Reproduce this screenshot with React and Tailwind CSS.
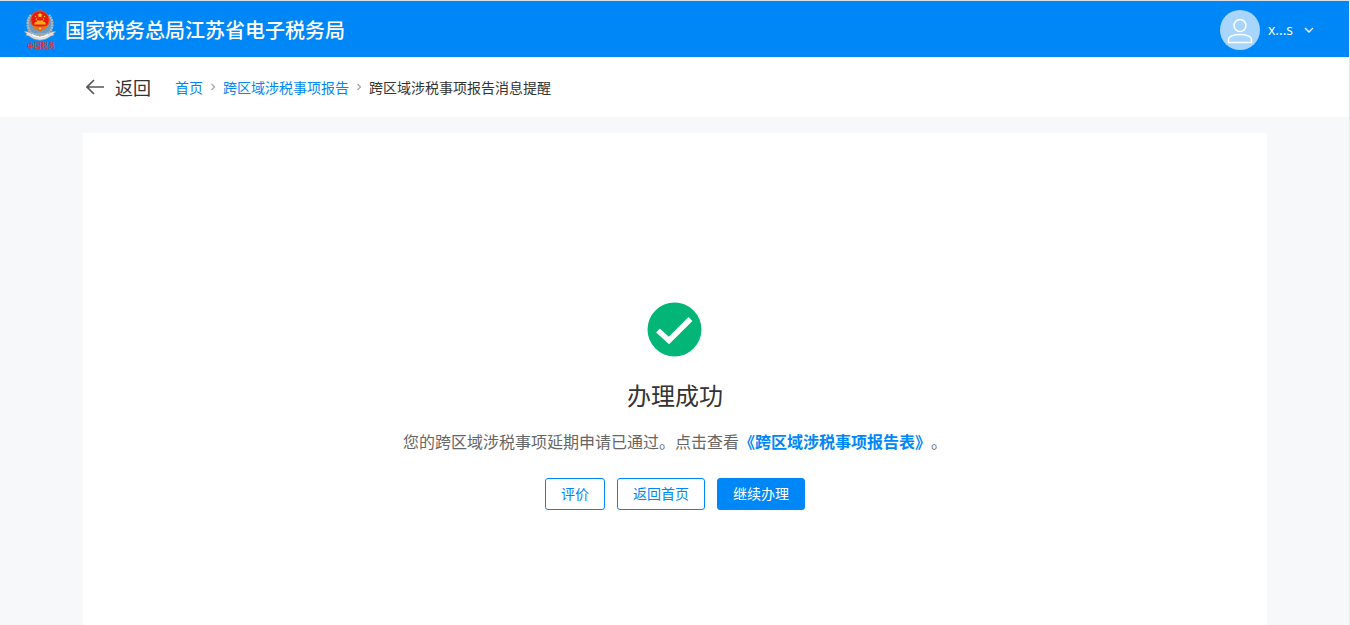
const crumbs = [
  { label: "首页", href: "#home" },
  { label: "跨区域涉税事项报告", href: "#report" },
];

const TaxEmblem = () => (
  <svg aria-hidden="true" viewBox="0 0 36 42" className="h-[42px] w-9 shrink-0">
    <path
      d="M9 6C4.500 11 4.500 19 9 24l9 4 9-4c4.500-5 4.500-13 0-18"
      fill="#6a9cc4"
      stroke="#b9b9b4"
      strokeWidth="2.400"
      strokeDasharray="2 0.600"
    />
    <path
      d="M2 22.500c5 0 7 1.500 9 3 4 2 10 2 14 0 2-1.500 4-3 9-3l-2.500 2 .5 2c-4 0-5 2.500-8 3.500-4 1.500-8 1.500-12 0-3-1-4-3.500-8-3.500l.5-2z"
      fill="#dddfe1"
      stroke="#8b98a5"
      strokeWidth="0.600"
    />
    <path d="M10 25.500c5 3 11 3 16 0" fill="none" stroke="#fff" strokeWidth="1.400" />
    <path d="m13.500 24 4.500 4 4.500-4z" fill="#a9a59c" />
    <circle cx="18" cy="11" r="9.200" fill="#e8190f" stroke="#f0551c" strokeWidth="1" />
    <path
      d="m18 3.500.8 1.700 1.900.2-1.400 1.300.4 1.900-1.700-1-1.700 1 .4-1.900-1.400-1.300 1.900-.2z"
      fill="#ffd83a"
    />
    <g fill="#ffc928">
      <circle cx="13.500" cy="7.500" r="0.700" />
      <circle cx="22.500" cy="7.500" r="0.700" />
      <circle cx="14.500" cy="10" r="0.700" />
      <circle cx="21.500" cy="10" r="0.700" />
    </g>
    <path d="M14 11.500h8l-1 1.500h2l1 2.500H12l1-2.500h2z" fill="#f7a81c" />
    <path d="M10.500 16.500c5 1.500 10 1.500 15 0l-2 3.500c-4 2-7 2-11 0z" fill="#f2701b" />
    <circle cx="18" cy="19.500" r="2" fill="#ffb52b" stroke="#d8360f" strokeWidth="0.600" />
    <text
      x="19"
      y="39"
      textAnchor="middle"
      fontSize="7"
      fontWeight="500"
      fill="#e5322b"
    >
      中国税务
    </text>
  </svg>
);

const CrumbArrow = () => (
  <svg
    aria-hidden="true"
    viewBox="0 0 20 14"
    className="h-[14px] w-5 shrink-0 fill-none stroke-[#a6a6a6]"
  >
    <path d="m8.500 4 3 3-3 3" strokeWidth="1.300" />
  </svg>
);

const Header = () => (
  <header className="flex h-[57px] items-center justify-between border-t border-[#dcdfe0] bg-[#0087f7] pl-[22px] pr-9 pt-[2px] text-white">
    <div className="flex items-center gap-[7px]">
      <TaxEmblem />
      <h1 className="text-xl font-medium">国家税务总局江苏省电子税务局</h1>
    </div>
    <button type="button" className="flex items-center gap-2">
      <svg aria-hidden="true" viewBox="0 0 40 40" className="h-10 w-10">
        <circle cx="20" cy="20" r="20" fill="#a8d5fc" />
        <g fill="none" stroke="#fff" strokeWidth="1.500">
          <circle cx="20" cy="15.500" r="6" />
          <path d="M8.500 32.500v-3c0-3 5-5 11.500-5s11.500 2 11.500 5v3z" />
        </g>
      </svg>
      <span className="font-['Open_Sans',sans-serif] text-sm">x...s</span>
      <svg
        aria-hidden="true"
        viewBox="0 0 10 10"
        className="ml-[3px] h-[10px] w-[10px] fill-none stroke-white"
      >
        <path d="m1 3 4 4 4-4" strokeWidth="1.300" />
      </svg>
    </button>
  </header>
);

const Breadcrumb = () => (
  <div className="bg-white">
    <div className="mx-auto flex h-[60px] max-w-[1184px] items-center">
      <button
        type="button"
        className="flex items-center gap-[9px] text-lg text-[#333333]"
      >
        <svg
          aria-hidden="true"
          viewBox="0 0 20 18"
          className="ml-[3px] h-[18px] w-5 fill-none stroke-[#555555]"
        >
          <path d="M18 9H1M8 2 1 9l7 7" strokeWidth="1.600" />
        </svg>
        返回
      </button>
      <nav aria-label="breadcrumb" className="ml-6 flex items-center text-sm">
        {crumbs.map((crumb) => (
          <span key={crumb.label} className="flex items-center">
            <a href={crumb.href} className="text-[#0087f7]">
              {crumb.label}
            </a>
            <CrumbArrow />
          </span>
        ))}
        <span className="text-[#333333]">跨区域涉税事项报告消息提醒</span>
      </nav>
    </div>
  </div>
);

const Result = () => (
  <section className="mx-auto flex w-full max-w-[1184px] flex-1 flex-col items-center bg-white px-6 pb-16 pt-[168px]">
    <svg aria-hidden="true" viewBox="0 0 56 56" className="h-14 w-14">
      <circle cx="27.500" cy="28.500" r="27" fill="#04b578" />
      <path
        d="m11 29.500 11 10L43.500 18"
        fill="none"
        stroke="#fff"
        strokeWidth="5.500"
      />
    </svg>
    <h2 className="mt-5 text-2xl leading-9 text-[#333333]">办理成功</h2>
    <p className="mt-4 text-base leading-6 text-[#666666] [text-spacing-trim:space-all]">
      您的跨区域涉税事项延期申请已通过。点击查看
      <a href="#form" className="font-bold text-[#0087f7]">
        《跨区域涉税事项报告表》
      </a>
      。
    </p>
    <div className="mt-[25px] flex gap-3 text-sm">
      <button
        type="button"
        className="h-8 rounded-[3px] border border-[#0087f7] px-[15px] pb-[2px] text-[#0087f7]"
      >
        评价
      </button>
      <button
        type="button"
        className="h-8 rounded-[3px] border border-[#0087f7] px-[15px] pb-[2px] text-[#0087f7]"
      >
        返回首页
      </button>
      <button
        type="button"
        className="h-8 rounded-[3px] border border-[#0087f7] bg-[#0087f7] px-[15px] pb-[2px] text-white"
      >
        继续办理
      </button>
    </div>
  </section>
);

const App = () => {
  return (
    <div className="relative flex min-h-screen flex-col bg-[#f7f8fa] font-['Noto_Sans_CJK_SC',sans-serif]">
      <Header />
      <Breadcrumb />
      <main className="flex flex-1 flex-col pt-4">
        <Result />
      </main>
      <div className="absolute inset-y-0 right-0 w-px bg-[#e8eaec]" />
    </div>
  );
};

export default App;
